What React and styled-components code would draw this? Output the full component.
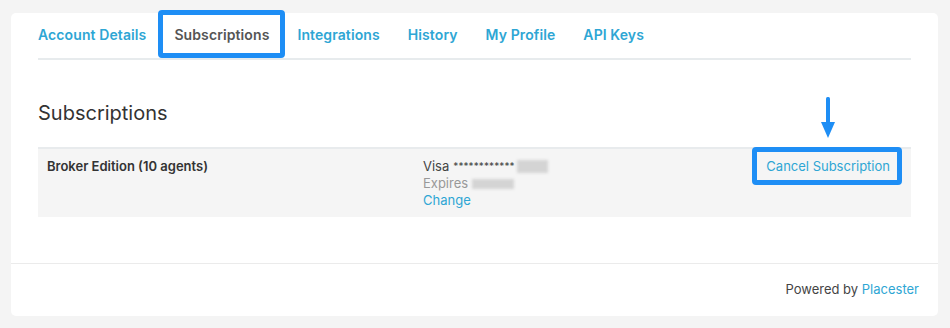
import React from 'react';
import styled, { createGlobalStyle } from 'styled-components';

const GlobalStyle = createGlobalStyle`
  body {
    margin: 0;
    background: #f4f4f4;
    font-family: Inter, "Open Sans", sans-serif;
    color: #333;
  }
`;

const BLUE = '#2ea6d4';
const MARK = '#1e8ef5';

const StyledPage = styled.div`
  padding: 13px 12px 12px 11px;
`;

const StyledCard = styled.div`
  background: #fff;
  border-radius: 5px;
  height: 303px;
  display: flex;
  flex-direction: column;
`;

const StyledTabs = styled.nav`
  margin: 0 27px;
  height: 45px;
  border-bottom: 2px solid #e7ebed;
  display: flex;
  align-items: center;
  gap: 28px;
`;

const StyledTab = styled.a`
  position: relative;
  font-size: 14px;
  font-weight: 600;
  line-height: 17px;
  letter-spacing: 0.1px;
  color: ${({ active }) => (active ? '#555' : BLUE)};
  text-decoration: none;
  cursor: pointer;
  margin-top: -3px;

  ${({ marked }) =>
    marked &&
    `
    &::before {
      content: '';
      position: absolute;
      left: -16px;
      right: -16px;
      top: -16px;
      bottom: -15px;
      border: 5px solid ${MARK};
      border-radius: 4px;
    }
  `}
`;

const StyledContent = styled.section`
  flex: 1;
  padding: 41px 27px 0;
`;

const StyledHeading = styled.h2`
  margin: 0 0 22px;
  font-size: 20px;
  font-weight: 400;
  line-height: 24px;
  color: #333;
`;

const StyledRow = styled.div`
  background: #f5f5f5;
  border-top: 2px solid #e8ebed;
  display: grid;
  grid-template-columns: 376px 1fr auto;
  padding: 9px 21px 8px 9px;
  font-size: 13px;
  line-height: 17px;
`;

const StyledPlan = styled.div`
  font-weight: 600;
  color: #333;
`;

const StyledCardInfo = styled.div`
  display: flex;
  flex-direction: column;
  color: #444;
`;

const StyledLine = styled.span`
  display: flex;
  align-items: center;
  color: ${({ muted }) => (muted ? '#999' : 'inherit')};
`;

const StyledStars = styled.span`
  font-size: 10px;
  margin-left: 4px;
  letter-spacing: 0.1px;
`;

const StyledRedacted = styled.span`
  display: inline-block;
  width: ${({ w }) => w}px;
  height: ${({ h }) => h}px;
  margin-left: ${({ gap }) => gap}px;
  background: #d4d4d4;
  filter: blur(1.5px);
`;

const StyledLink = styled.a`
  color: ${BLUE};
  text-decoration: none;
  cursor: pointer;
`;

const StyledCancel = styled(StyledLink)`
  position: relative;
  display: inline-block;

  &::before {
    content: '';
    position: absolute;
    left: -14px;
    right: -12px;
    top: -11px;
    bottom: -10px;
    border: 5px solid ${MARK};
    border-radius: 4px;
  }
`;

const StyledArrow = styled.svg`
  position: absolute;
  left: 50%;
  bottom: calc(100% + 19px);
  transform: translateX(-50%);
`;

const StyledFooter = styled.footer`
  box-sizing: border-box;
  flex: none;
  border-top: 1px solid #ebebeb;
  height: 53px;
  display: flex;
  align-items: center;
  justify-content: flex-end;
  padding: 0 19px 3px;
  font-size: 13px;
  color: #444;
`;

const tabs = ['Account Details', 'Subscriptions', 'Integrations', 'History', 'My Profile', 'API Keys'];

const App = () => (
  <StyledPage>
    <GlobalStyle />
    <StyledCard>
      <StyledTabs>
        {tabs.map((tab) => (
          <StyledTab key={tab} active={tab === 'Subscriptions'} marked={tab === 'Subscriptions'}>
            {tab}
          </StyledTab>
        ))}
      </StyledTabs>
      <StyledContent>
        <StyledHeading>Subscriptions</StyledHeading>
        <StyledRow>
          <StyledPlan>Broker Edition (10 agents)</StyledPlan>
          <StyledCardInfo>
            <StyledLine>
              Visa<StyledStars>************</StyledStars>
              <StyledRedacted w={31} h={13} gap={2} />
            </StyledLine>
            <StyledLine muted>
              Expires
              <StyledRedacted w={42} h={10} gap={4} />
            </StyledLine>
            <StyledLine>
              <StyledLink>Change</StyledLink>
            </StyledLine>
          </StyledCardInfo>
          <div>
            <StyledCancel>
              <StyledArrow width="16" height="42" viewBox="0 0 16 42">
                <rect x="6" y="0" width="4" height="28" rx="1.5" fill={MARK} />
                <path d="M1 25 L15 25 L8 41 Z" fill={MARK} />
              </StyledArrow>
              Cancel Subscription
            </StyledCancel>
          </div>
        </StyledRow>
      </StyledContent>
      <StyledFooter>
        Powered by&nbsp;<StyledLink>Placester</StyledLink>
      </StyledFooter>
    </StyledCard>
  </StyledPage>
);

export default App;
